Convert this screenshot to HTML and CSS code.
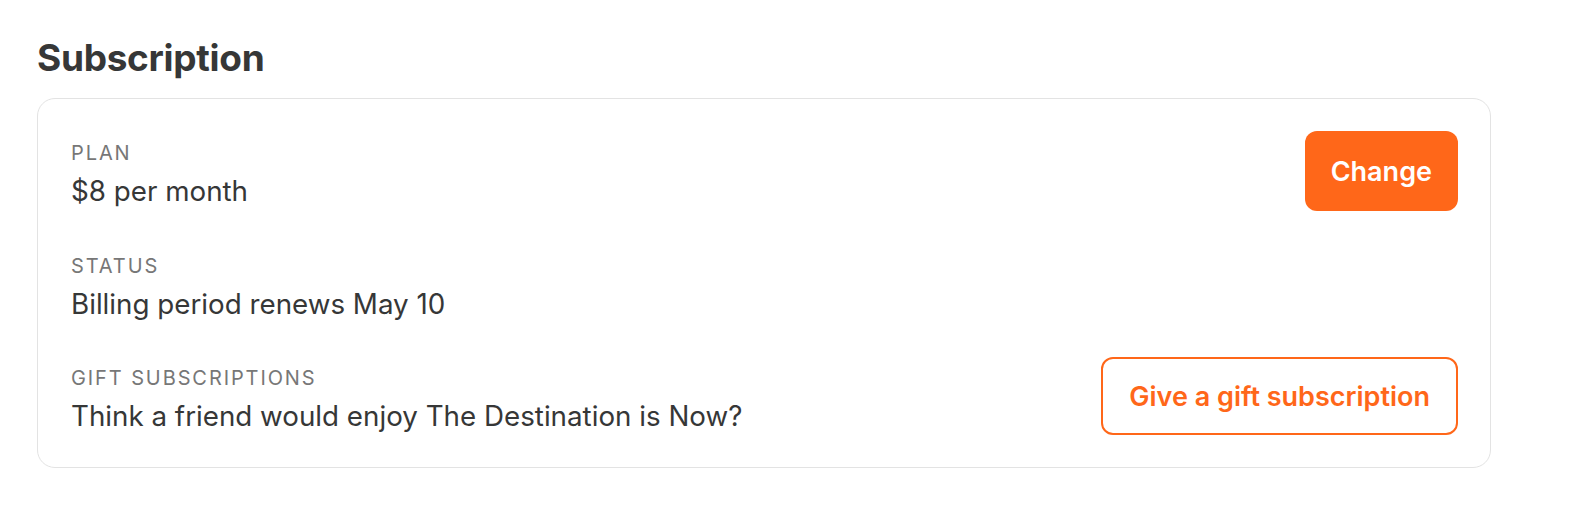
FILE: index.html
```html
<!DOCTYPE html>
<html>
<head>
<meta charset="utf-8">
<link rel="stylesheet" href="styles.css">
</head>
<body>
<div class="page">
  <h1 class="title">Subscription</h1>
  <div class="card">
    <div class="row">
      <div class="info">
        <div class="label">Plan</div>
        <div class="value">$8 per month</div>
      </div>
      <button class="btn btn-solid">Change</button>
    </div>
    <div class="row">
      <div class="info">
        <div class="label">Status</div>
        <div class="value">Billing period renews May 10</div>
      </div>
    </div>
    <div class="row">
      <div class="info">
        <div class="label">Gift subscriptions</div>
        <div class="value">Think a friend would enjoy The Destination is Now?</div>
      </div>
      <button class="btn btn-outline">Give a gift subscription</button>
    </div>
  </div>
</div>
</body>
</html>
```

FILE: styles.css
```css
* { box-sizing: border-box; }
html, body { margin: 0; padding: 0; background: #fff; }
body {
  font-family: Inter, "Noto Sans", "Liberation Sans", sans-serif;
  color: #363737;
}
.page {
  width: 1454px;
  margin-left: 37px;
  padding-top: 36px;
}
.title {
  margin: 0 0 18px 0;
  font-size: 37px;
  line-height: 44px;
  font-weight: 700;
  letter-spacing: -0.3px;
  color: #363737;
}
.card {
  border: 1px solid #e3e3e3;
  border-radius: 18px;
  padding: 32px 32px 32px 33px;
  display: flex;
  flex-direction: column;
  gap: 34px;
}
.row {
  display: flex;
  align-items: center;
  justify-content: space-between;
}
.info {
  display: flex;
  flex-direction: column;
  gap: 8px;
  padding-top: 9px;
}
.label {
  font-size: 20px;
  line-height: 24px;
  text-transform: uppercase;
  letter-spacing: 1.9px;
  color: #777777;
}
.value {
  font-size: 27.75px;
  line-height: 37px;
  color: #363737;
}
.btn {
  font-family: inherit;
  font-size: 27px;
  font-weight: 600;
  border-radius: 12px;
  padding: 0 26px;
  cursor: pointer;
}
.btn-solid {
  height: 80px;
  background: #ff6719;
  color: #fff;
  border: none;
}
.btn-outline {
  height: 78px;
  background: #fff;
  color: #ff6719;
  border: 2px solid #ff6719;
}
```
